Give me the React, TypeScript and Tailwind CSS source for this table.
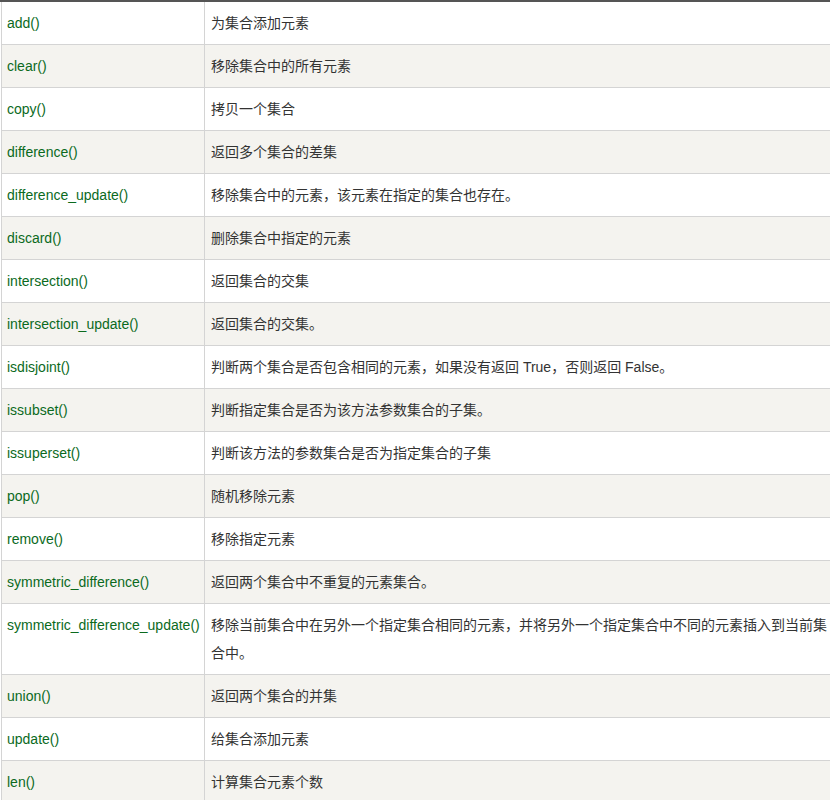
const rows: [string, string][] = [
  ["add()", "为集合添加元素"],
  ["clear()", "移除集合中的所有元素"],
  ["copy()", "拷贝一个集合"],
  ["difference()", "返回多个集合的差集"],
  ["difference_update()", "移除集合中的元素，该元素在指定的集合也存在。"],
  ["discard()", "删除集合中指定的元素"],
  ["intersection()", "返回集合的交集"],
  ["intersection_update()", "返回集合的交集。"],
  ["isdisjoint()", "判断两个集合是否包含相同的元素，如果没有返回 True，否则返回 False。"],
  ["issubset()", "判断指定集合是否为该方法参数集合的子集。"],
  ["issuperset()", "判断该方法的参数集合是否为指定集合的子集"],
  ["pop()", "随机移除元素"],
  ["remove()", "移除指定元素"],
  ["symmetric_difference()", "返回两个集合中不重复的元素集合。"],
  [
    "symmetric_difference_update()",
    "移除当前集合中在另外一个指定集合相同的元素，并将另外一个指定集合中不同的元素插入到当前集合中。",
  ],
  ["union()", "返回两个集合的并集"],
  ["update()", "给集合添加元素"],
  ["len()", "计算集合元素个数"],
];

export default function App() {
  return (
    <div className="w-[830px] overflow-hidden bg-white font-['Liberation_Sans','Noto_Sans_CJK_SC',sans-serif] text-[14px]">
      <div className="h-[2px] w-full bg-[#555]" />
      <table className="ml-px w-[836px] table-fixed border-separate border-spacing-0">
        <colgroup>
          <col className="w-[204px]" />
          <col className="w-[632px]" />
        </colgroup>
        <tbody>
          {rows.map(([method, desc], i) => (
            <tr key={method} className={i % 2 === 1 ? "bg-[#f4f3ef]" : "bg-white"}>
              <td className="border-b border-l border-r border-[#d4d4d4] px-[5px] py-[7px] align-top leading-[28px] whitespace-nowrap text-[#0b6a1d]">
                {method}
              </td>
              <td className="border-b border-r border-[#d4d4d4] pl-[6px] pr-[5px] py-[7px] align-top leading-[28px] text-[#333]">
                {desc}
              </td>
            </tr>
          ))}
        </tbody>
      </table>
    </div>
  );
}
